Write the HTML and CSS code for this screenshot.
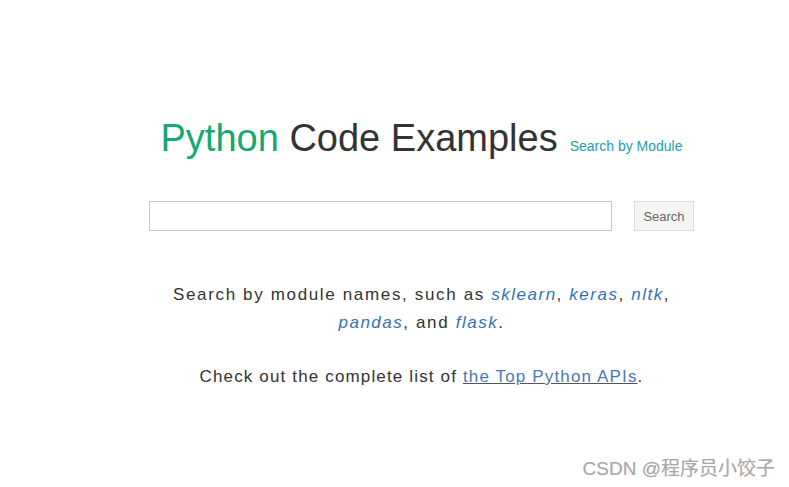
FILE: index.html
```html
<!DOCTYPE html>
<html lang="en">
<head>
<meta charset="utf-8">
<title>Python Code Examples</title>
<link rel="stylesheet" href="styles.css">
</head>
<body>
<div class="page">
  <h1 class="title"><span class="py">Python</span> Code Examples<a class="bymod" href="#">Search by Module</a></h1>
  <form class="search">
    <input class="search-input" type="text">
    <button class="search-btn" type="button">Search</button>
  </form>
  <p class="hint">Search by module names, such as <a class="mod" href="#">sklearn</a>, <a class="mod" href="#">keras</a>, <a class="mod" href="#">nltk</a>,<br><a class="mod" href="#">pandas</a>, and <a class="mod" href="#">flask</a>.</p>
  <p class="hint hint-2">Check out the complete list of <a class="top" href="#">the Top Python APIs</a>.</p>
</div>
<div class="watermark">CSDN @程序员小饺子</div>
</body>
</html>
```
FILE: styles.css
```css
html, body {
  margin: 0;
  background: #fff;
}
body {
  font-family: "Liberation Sans", Arial, sans-serif;
  color: #333;
  width: 789px;
  height: 487px;
  position: relative;
  overflow: hidden;
}
.page {
  padding: 116px 0 0 54px;
}
.title {
  margin: 0;
  text-align: center;
  font-size: 38px;
  font-weight: normal;
  line-height: 44px;
  color: #333;
}
.py {
  color: #16a870;
}
.bymod {
  margin-left: 12px;
  font-size: 14px;
  line-height: 1;
  color: #1b9eae;
  text-decoration: none;
}
.search {
  display: flex;
  justify-content: center;
  gap: 22px;
  margin: 41px 0 0;
}
.search-input {
  box-sizing: border-box;
  width: 463px;
  height: 30px;
  border: 1px solid #c8c8c8;
  margin: 0;
  padding: 0 8px;
}
.search-btn {
  box-sizing: border-box;
  width: 60px;
  height: 30px;
  margin: 0;
  border: 1px solid #dcdcdc;
  background: #f5f5f5;
  color: #666;
  font-family: "Liberation Sans", Arial, sans-serif;
  font-size: 13px;
  padding: 0;
}
.hint {
  margin: 50px 0 0;
  text-align: center;
  font-size: 17px;
  letter-spacing: 1.65px;
  line-height: 28px;
  color: #333;
}
.hint-2 {
  margin-top: 26px;
  letter-spacing: 1.15px;
}
.mod {
  font-style: italic;
  color: #3372b5;
  letter-spacing: 1.5px;
  text-decoration: none;
}
.top {
  color: #4a78b8;
  text-decoration: underline;
  text-decoration-color: #555;
}
.watermark {
  position: absolute;
  right: 14px;
  bottom: 6px;
  font-family: "Liberation Sans", "Noto Sans CJK SC", sans-serif;
  font-size: 19px;
  line-height: 24px;
  color: #a8a8a8;
  text-shadow: 0 0 1px #ddd;
}
```
